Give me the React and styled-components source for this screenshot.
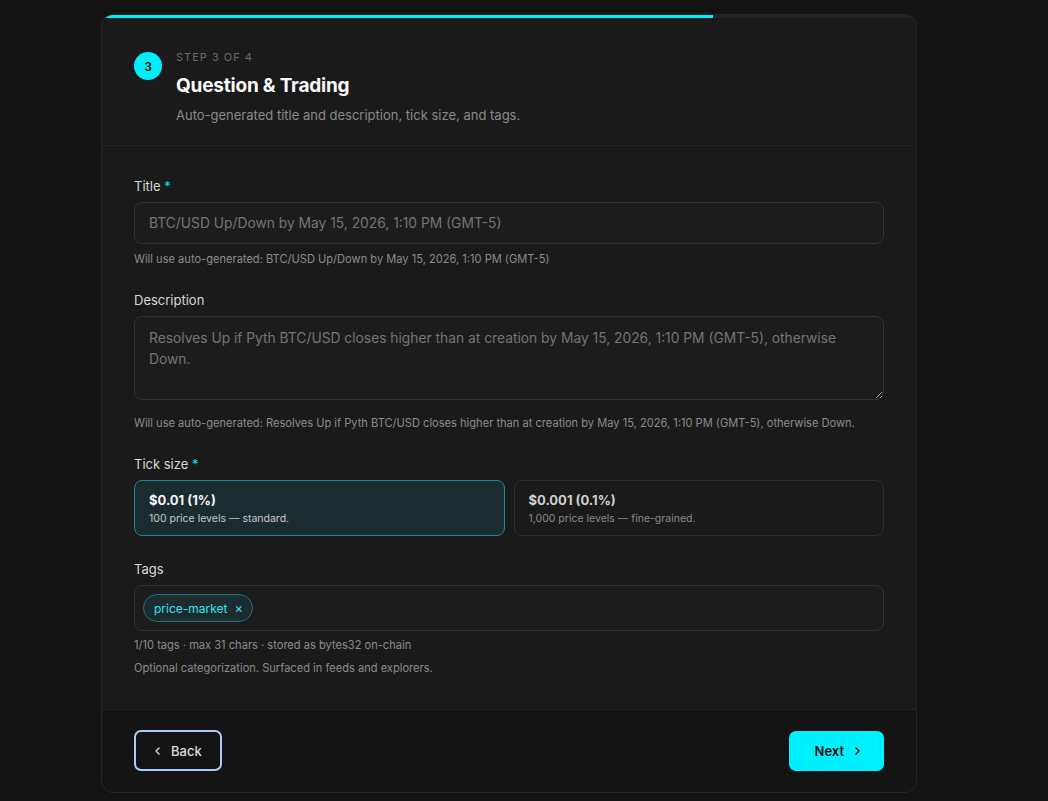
import React from 'react';
import styled, { createGlobalStyle } from 'styled-components';

const GlobalStyle = createGlobalStyle`
  * { box-sizing: border-box; }
  body {
    margin: 0;
    background: #131313;
    font-family: Inter, "Noto Sans", sans-serif;
    color: #e8e8e8;
  }
`;

const Page = styled.div`
  display: flex;
  padding: 14px 0 9px 101px;
`;

const Card = styled.div`
  position: relative;
  width: 816px;
  background: #1a1a1a;
  border: 1px solid #262626;
  border-radius: 12px;
  overflow: hidden;
`;

const Progress = styled.div`
  position: absolute;
  top: 0;
  left: 0;
  right: 0;
  height: 3px;
  background: #222;
`;

const ProgressFill = styled.div`
  height: 100%;
  background: #00eefc;
`;

const Header = styled.header`
  display: flex;
  gap: 14px;
  padding: 34px 32px 20px;
  border-bottom: 1px solid #242424;
`;

const StepBadge = styled.div`
  flex: none;
  width: 28px;
  height: 28px;
  margin-top: 3px;
  border-radius: 50%;
  background: #00eefc;
  color: #0b0b0b;
  font-size: 12px;
  font-weight: 600;
  display: flex;
  align-items: center;
  justify-content: center;
`;

const HeadText = styled.div`
  display: flex;
  flex-direction: column;
`;

const StepLabel = styled.div`
  font-size: 11px;
  line-height: 16px;
  letter-spacing: 1px;
  color: #6b6b6b;
`;

const Title = styled.h1`
  margin: 7px 0 0;
  font-size: 19px;
  line-height: 28px;
  font-weight: 700;
  color: #fafafa;
  letter-spacing: -0.2px;
`;

const Subtitle = styled.p`
  margin: 5px 0 0;
  font-size: 13px;
  line-height: 20px;
  color: #8a8a8a;
`;

const Body = styled.div`
  padding: 30px 32px 33px;
  display: flex;
  flex-direction: column;
`;

const Field = styled.div`
  display: flex;
  flex-direction: column;
  & + & { margin-top: 23px; }
`;

const Label = styled.label`
  font-size: 13px;
  line-height: 20px;
  color: #d8d8d8;
  margin-bottom: 6px;

  span { color: #00e5f2; }
`;

const Input = styled.input`
  height: 42px;
  width: 100%;
  padding: 0 14px;
  background: #1c1c1c;
  border: 1px solid #333;
  border-radius: 8px;
  font-family: inherit;
  font-size: 13.8px;
  color: #9a9a9a;
  outline: none;
`;

const TextArea = styled.textarea`
  display: block;
  width: 100%;
  height: 84px;
  padding: 11px 14px;
  background: #1c1c1c;
  border: 1px solid #333;
  border-radius: 8px;
  font-family: inherit;
  font-size: 13.8px;
  line-height: 21px;
  color: #9a9a9a;
  resize: vertical;
  outline: none;
`;

const Help = styled.div`
  margin-top: ${p => p.$gap || 7}px;
  font-size: 11.1px;
  line-height: 16px;
  color: #8c8c8c;
`;

const TickGrid = styled.div`
  display: grid;
  grid-template-columns: 1fr 1fr;
  gap: 9px;
`;

const TickOption = styled.button`
  height: 56px;
  padding: 0 14px;
  text-align: left;
  font-family: inherit;
  border-radius: 8px;
  cursor: pointer;
  background: ${p => (p.$active ? '#1b2c30' : '#1a1a1a')};
  border: 1px solid ${p => (p.$active ? '#1e8a95' : '#2e2e2e')};
  display: flex;
  flex-direction: column;
  justify-content: center;
  gap: 3px;
`;

const TickValue = styled.div`
  font-size: 13px;
  line-height: 18px;
  font-weight: 700;
  color: ${p => (p.$active ? '#f5f5f5' : '#cfcfcf')};
`;

const TickNote = styled.div`
  font-size: 10.5px;
  line-height: 14px;
  color: ${p => (p.$active ? '#c8c8c8' : '#8a8a8a')};
`;

const TagBox = styled.div`
  height: 46px;
  padding: 0 8px;
  display: flex;
  align-items: center;
  gap: 6px;
  background: #1c1c1c;
  border: 1px solid #333;
  border-radius: 8px;
`;

const Chip = styled.span`
  display: inline-flex;
  align-items: center;
  gap: 7px;
  height: 28px;
  padding: 0 9px 0 10px;
  border-radius: 14px;
  background: #1b2b2e;
  border: 1px solid #1d7580;
  color: #2fe6f2;
  font-size: 12px;
`;

const ChipClose = styled.span`
  font-size: 13px;
  line-height: 1;
`;

const Footer = styled.footer`
  display: flex;
  justify-content: space-between;
  align-items: center;
  padding: 20px 32px 21px;
  background: #141414;
  border-top: 1px solid #242424;
`;

const BackButton = styled.button`
  height: 41px;
  padding: 0 18px 0 17px;
  display: flex;
  align-items: center;
  gap: 8px;
  background: transparent;
  border: 2px solid #a9cdf5;
  border-radius: 7px;
  color: #dcdcdc;
  font-family: inherit;
  font-size: 13px;
  font-weight: 500;
`;

const NextButton = styled.button`
  height: 40px;
  padding: 0 22px 0 26px;
  display: flex;
  align-items: center;
  gap: 8px;
  background: #00f0ff;
  border: none;
  border-radius: 7px;
  color: #0b0b0b;
  font-family: inherit;
  font-size: 13px;
  font-weight: 600;
`;

const Chevron = ({ dir }) => (
  <svg width="10" height="10" viewBox="0 0 10 10" fill="none">
    <path
      d={dir === 'left' ? 'M6 2 L3 5 L6 8' : 'M4 2 L7 5 L4 8'}
      stroke="currentColor"
      strokeWidth="1.4"
      strokeLinecap="round"
      strokeLinejoin="round"
    />
  </svg>
);

const ticks = [
  { value: '$0.01 (1%)', note: '100 price levels — standard.', active: true },
  { value: '$0.001 (0.1%)', note: '1,000 price levels — fine-grained.', active: false },
];

const autoTitle = 'BTC/USD Up/Down by May 15, 2026, 1:10 PM (GMT-5)';
const autoDesc =
  'Resolves Up if Pyth BTC/USD closes higher than at creation by May 15, 2026, 1:10 PM (GMT-5), otherwise Down.';

export default function App() {
  return (
    <>
      <GlobalStyle />
      <Page>
        <Card>
          <Progress>
            <ProgressFill style={{ width: `${(3 / 4) * 100}%` }} />
          </Progress>
          <Header>
            <StepBadge>3</StepBadge>
            <HeadText>
              <StepLabel>STEP 3 OF 4</StepLabel>
              <Title>Question &amp; Trading</Title>
              <Subtitle>Auto-generated title and description, tick size, and tags.</Subtitle>
            </HeadText>
          </Header>

          <Body>
            <Field>
              <Label>Title <span>*</span></Label>
              <Input placeholder={autoTitle} />
              <Help>Will use auto-generated: {autoTitle}</Help>
            </Field>

            <Field>
              <Label>Description</Label>
              <TextArea placeholder={autoDesc} />
              <Help $gap={15}>Will use auto-generated: {autoDesc}</Help>
            </Field>

            <Field>
              <Label>Tick size <span>*</span></Label>
              <TickGrid>
                {ticks.map(t => (
                  <TickOption key={t.value} $active={t.active}>
                    <TickValue $active={t.active}>{t.value}</TickValue>
                    <TickNote $active={t.active}>{t.note}</TickNote>
                  </TickOption>
                ))}
              </TickGrid>
            </Field>

            <Field>
              <Label>Tags</Label>
              <TagBox>
                <Chip>
                  price-market
                  <ChipClose>×</ChipClose>
                </Chip>
              </TagBox>
              <Help $gap={6}>1/10 tags · max 31 chars · stored as bytes32 on-chain</Help>
              <Help $gap={7}>Optional categorization. Surfaced in feeds and explorers.</Help>
            </Field>
          </Body>

          <Footer>
            <BackButton>
              <Chevron dir="left" />
              Back
            </BackButton>
            <NextButton>
              Next
              <Chevron dir="right" />
            </NextButton>
          </Footer>
        </Card>
      </Page>
    </>
  );
}
